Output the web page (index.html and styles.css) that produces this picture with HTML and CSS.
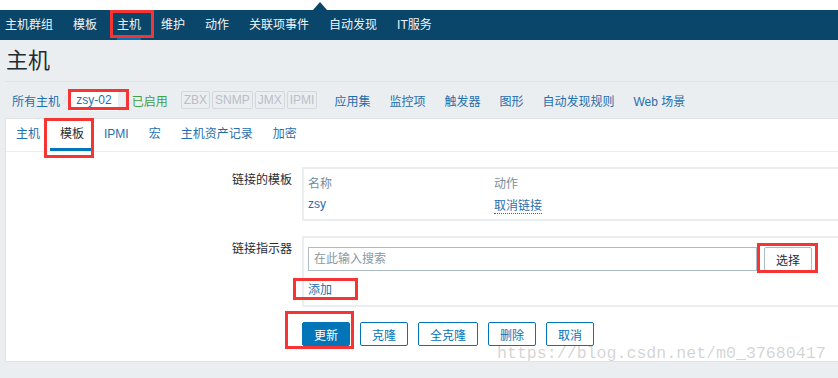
FILE: index.html
```html
<!DOCTYPE html>
<html lang="zh-CN">
<head>
<meta charset="UTF-8" />
<title>主机</title>
<link rel="stylesheet" href="styles.css">
</head>
<body>
  <div class="topstrip"><span class="caret"></span></div>

  <nav class="mainnav">
    <a>主机群组</a>
    <a>模板</a>
    <a class="active">主机</a>
    <a>维护</a>
    <a>动作</a>
    <a>关联项事件</a>
    <a>自动发现</a>
    <a>IT服务</a>
  </nav>

  <div class="page">
    <header class="title"><h1>主机</h1></header>

    <div class="crumbs">
      <a class="link">所有主机</a>
      <span class="sep">/</span>
      <span class="current">zsy-02</span>
      <span class="status">已启用</span>
      <span class="tags">
        <span class="tag">ZBX</span><span class="tag">SNMP</span><span class="tag">JMX</span><span class="tag">IPMI</span>
      </span>
      <a class="link first">应用集</a>
      <a class="link">监控项</a>
      <a class="link">触发器</a>
      <a class="link">图形</a>
      <a class="link">自动发现规则</a>
      <a class="link">Web 场景</a>
    </div>

    <div class="panel">
      <ul class="tabs">
        <li>主机</li>
        <li class="active">模板</li>
        <li>IPMI</li>
        <li>宏</li>
        <li>主机资产记录</li>
        <li>加密</li>
      </ul>

      <form class="form">
        <label class="label">链接的模板</label>
        <div class="box">
          <table class="linked">
            <tr><th class="col-name">名称</th><th>动作</th></tr>
            <tr><td class="col-name"><a class="link">zsy</a></td><td><a class="dotted">取消链接</a></td></tr>
          </table>
        </div>

        <label class="label">链接指示器</label>
        <div class="box box-pad">
          <div class="search">
            <input class="input" type="text" placeholder="在此输入搜索">
            <button type="button" class="btn-grey">选择</button>
          </div>
          <a class="dotted add">添加</a>
        </div>

        <div class="actions">
          <button type="button" class="btn primary">更新</button>
          <button type="button" class="btn">克隆</button>
          <button type="button" class="btn">全克隆</button>
          <button type="button" class="btn">删除</button>
          <button type="button" class="btn">取消</button>
        </div>
      </form>
    </div>
  </div>

  <!-- annotation boxes drawn over the screenshot -->
  <div class="mark mark-nav"></div>
  <div class="mark mark-host"></div>
  <div class="mark mark-tab"></div>
  <div class="mark mark-select"></div>
  <div class="mark mark-add"></div>
  <div class="mark mark-update"></div>

  <div class="watermark">https://blog.csdn.net/m0_37680417</div>
</body>
</html>
```

FILE: styles.css
```css
* { box-sizing: border-box; margin: 0; padding: 0; }
html, body { width: 838px; height: 378px; overflow: hidden; }
body {
  font-family: "Liberation Sans", "Noto Sans CJK SC", sans-serif;
  font-size: 12px; color: #1f2c33;
  background: #ebeef1;
}
a { text-decoration: none; cursor: pointer; }

/* top strip + nav */
.topstrip { height: 10px; background: #fff; display: flex; align-items: flex-end; }
.caret {
  width: 0; height: 0; margin-left: 313px;
  border-left: 7px solid transparent; border-right: 7px solid transparent;
  border-bottom: 8px solid #0a466a;
}
.mainnav {
  height: 30px; background: #0a466a;
  display: flex; gap: 20px; padding-left: 5px;
}
.mainnav a { color: #f2f5f7; line-height: 30px; }
.mainnav a.active { box-shadow: inset 0 -2px 0 #0275b8; }

/* page header */
.page { padding-left: 5px; }
.title {
  height: 42px; display: flex; align-items: center;
  padding-left: 1px; border-bottom: 1px solid #dfe4e7;
}
.title h1 { font-size: 22px; font-weight: normal; line-height: 1; }

.crumbs {
  height: 36px; display: flex; align-items: center;
  padding-left: 7px;
}
.link { color: #1f6fad; }
.crumbs .link { margin-right: 19px; }
.crumbs .link:first-child { margin-right: 0; }
.crumbs .link.first { margin-left: 17px; }
.sep { color: #dde3e7; margin: 0 4px 0 3px; }
.current {
  background: #fff; color: #1f6fad;
  height: 21px; line-height: 21px; padding: 0 6px;
}
.status { color: #429e47; margin-left: 14px; }
.tags { display: flex; gap: 2px; margin-left: 13px; }
.tag {
  height: 18px; line-height: 16px; padding: 0 2px;
  border: 1px solid #d2d8dc; color: #b9c0c5; border-radius: 2px;
}

/* white panel */
.panel {
  background: #fff; margin-right: -30px;
  border: 1px solid #dfe4e7;
  padding-bottom: 15px;
}
.tabs {
  list-style: none; display: flex; height: 33px;
  border-bottom: 1px solid #ebeef1;
}
.tabs li { padding: 0 10px; line-height: 30px; color: #1f6fad; border-bottom: 3px solid transparent; }
.tabs li.active { color: #1f2c33; border-bottom-color: #0275b8; }

.form {
  display: grid; grid-template-columns: 286px 1fr;
  column-gap: 10px; row-gap: 15px;
  padding-top: 15px;
}
.label { text-align: right; padding-top: 5px; line-height: 16px; }
.box { border: 2px solid #ebeef1; padding: 2px 4px 4px; }
.box-pad { padding: 9px 4px 7px; }

.linked { border-collapse: collapse; }
.linked th, .linked td { height: 22px; text-align: left; padding: 0; font-weight: normal; }
.linked th { color: #768d99; }
.col-name { width: 186px; }
.dotted { color: #1f6fad; border-bottom: 1px dotted #1f6fad; }

.search { display: flex; gap: 7px; }
.input {
  width: 449px; height: 24px; border: 1px solid #acbbc6;
  padding: 0 5px; font: inherit; color: #1f2c33;
}
.input::placeholder { color: #8a979e; }
.btn-grey {
  width: 48px; height: 24px; background: #fff;
  border: 1px solid #acbbc6; border-radius: 2px;
  font: inherit; color: #1f2c33;
}
.add { display: inline-block; margin-top: 12px; line-height: 14px; }

.actions { grid-column: 2; display: flex; gap: 10px; }
.btn {
  height: 24px; padding: 0 11px; font: inherit;
  background: #fff; color: #0275b8;
  border: 1px solid #0275b8; border-radius: 2px;
}
.btn.primary { background: #0275b8; color: #fff; }

/* red annotation boxes */
.mark { position: absolute; border: 3px solid #f53434; }
.mark-nav { left: 110px; top: 10px; width: 44px; height: 28px; }
.mark-host { left: 68px; top: 89px; width: 61px; height: 21px; }
.mark-tab { left: 44px; top: 118px; width: 50px; height: 40px; }
.mark-select { left: 757px; top: 243px; width: 61px; height: 30px; }
.mark-add { left: 293px; top: 278px; width: 65px; height: 22px; }
.mark-update { left: 285px; top: 311px; width: 69px; height: 38px; }

.watermark {
  position: absolute; left: 497px; top: 344px;
  font-family: "Liberation Mono", monospace; font-size: 16.6px;
  color: rgba(140, 140, 140, 0.38); line-height: 20px;
  pointer-events: none;
}
```
